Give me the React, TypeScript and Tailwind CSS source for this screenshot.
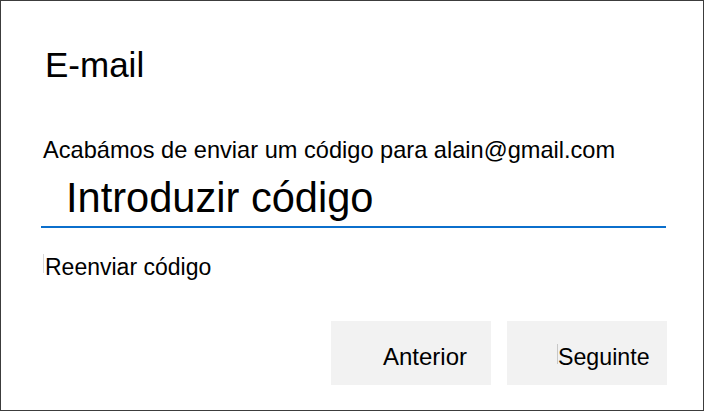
import React from "react";

export default function App() {
  return (
    <div className="w-[706px] h-[412px] bg-white" style={{ fontFamily: '"Liberation Sans", Arial, sans-serif' }}>
      <div className="w-[704px] h-[411px] border border-[#3c3c3c] bg-white text-black flex flex-col">
        <h1 className="pt-[44px] pl-[44px] text-[35px] leading-[40px] font-normal">E-mail</h1>
        <p className="mt-[51px] pl-[42px] text-[23.6px] leading-[28px]">
          Acabámos de enviar um código para alain@gmail.com
        </p>
        <div className="mt-[10px] ml-[40px] w-[625px] border-b-2 border-[#0b6fcc] pb-[4px] pl-[25px] text-[41.6px] leading-[48px]">
          Introduzir código
        </div>
        <div className="mt-[25px] ml-[42px] flex items-start text-[23px] leading-[28px]">
          <span className="w-px h-[19px] mt-[1px] bg-[#d8d8d8]" />
          <span className="ml-[1px]">Reenviar código</span>
        </div>
        <div className="mt-[40px] flex justify-end gap-[16px] pr-[36px]">
          <button className="w-[160px] h-[64px] bg-[#f2f2f2] pl-[52px] pt-[24px] text-left text-[24px] leading-[24px] flex items-start">
            <span>Anterior</span>
          </button>
          <button className="w-[160px] h-[64px] bg-[#f2f2f2] pl-[50px] pt-[24px] text-left text-[24px] leading-[24px] flex items-start">
            <span className="w-px h-[20px] mt-[-1px] bg-[#c8c8c8]" />
            <span className="text-[23.2px]">Seguinte</span>
          </button>
        </div>
      </div>
    </div>
  );
}
